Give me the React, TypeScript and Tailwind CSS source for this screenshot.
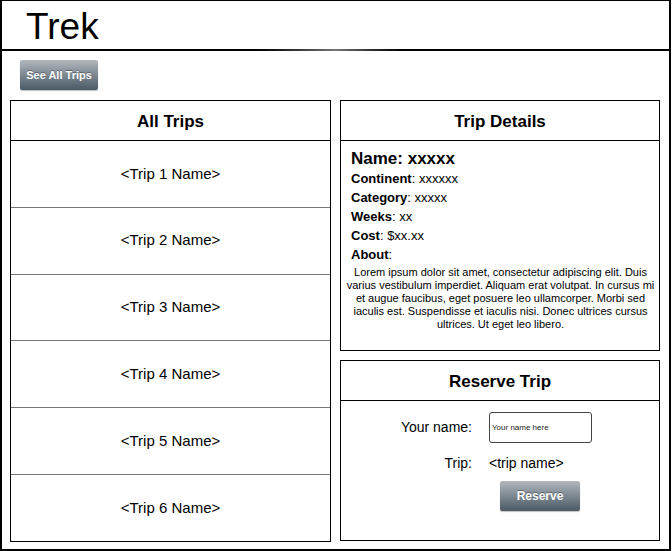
import React from 'react';

const TRIPS = ['<Trip 1 Name>', '<Trip 2 Name>', '<Trip 3 Name>', '<Trip 4 Name>', '<Trip 5 Name>', '<Trip 6 Name>'];

const DETAILS = [
  { label: 'Continent', value: 'xxxxxx' },
  { label: 'Category', value: 'xxxxx' },
  { label: 'Weeks', value: 'xx' },
  { label: 'Cost', value: '$xx.xx' },
];

const btn =
  'rounded-[2px] bg-linear-to-b from-[#b3b8bd] to-[#4a5a66] text-white font-bold [text-shadow:0_-1px_0_rgba(0,0,0,0.35)] shadow-[0_1px_1px_rgba(0,0,0,0.25)] flex items-center justify-center';

const panelTitle = 'h-[40px] shrink-0 border-b border-black flex items-center justify-center pt-[3px] text-[17px] font-bold';

export default function App() {
  return (
    <div className="w-[671px] h-[551px] bg-white border-2 border-t border-black flex flex-col font-['Liberation_Sans',Arial,sans-serif] text-black overflow-hidden">
      <header className="h-[48px] shrink-0 flex items-center pl-[24px]">
        <h1 className="text-[37px] leading-none pt-[2px]">Trek</h1>
      </header>
      <div className="h-[2px] shrink-0 bg-linear-to-r from-black from-36% via-[#777] via-50% to-black to-62%" />

      <div className="pl-[18px] pt-[9px]">
        <button className={`${btn} w-[78px] h-[30px] text-[11px]`}>See All Trips</button>
      </div>

      <div className="flex gap-[9px] pl-[8px] pt-[10px]">
        <section className="w-[321px] h-[442px] border border-black flex flex-col">
          <div className={panelTitle}>All Trips</div>
          {TRIPS.map((t, i) => (
            <div
              key={t}
              className={`flex-1 flex items-center justify-center text-[15px] ${i < TRIPS.length - 1 ? 'border-b border-[#777]' : ''}`}
            >
              {t}
            </div>
          ))}
        </section>

        <div className="flex flex-col gap-[9px]">
          <section className="w-[320px] h-[251px] border border-black flex flex-col">
            <div className={panelTitle}>Trip Details</div>
            <div className="pl-[10px] pr-[3px] pt-[8px]">
              <p className="text-[17px] leading-[20px] font-bold">Name: xxxxx</p>
              {DETAILS.map((d) => (
                <p key={d.label} className="text-[13px] leading-[19px]">
                  <span className="font-bold">{d.label}</span>: {d.value}
                </p>
              ))}
              <p className="text-[13px] leading-[19px]">
                <span className="font-bold">About</span>:
              </p>
              <p className="text-[11px] leading-[13px] text-center -ml-[6px] mt-[2px]">
                Lorem ipsum dolor sit amet, consectetur adipiscing elit. Duis varius vestibulum imperdiet. Aliquam erat
                volutpat. In cursus mi et augue faucibus, eget posuere leo ullamcorper. Morbi sed iaculis est. Suspendisse
                et iaculis nisi. Donec ultrices cursus ultrices. Ut eget leo libero.
              </p>
            </div>
          </section>

          <section className="w-[320px] h-[181px] border border-black flex flex-col">
            <div className={panelTitle}>Reserve Trip</div>
            <div className="grid grid-cols-[131px_1fr] gap-x-[17px] pt-[11px] text-[14px]">
              <span className="text-right self-center">Your name:</span>
              <input
                type="text"
                placeholder="Your name here"
                className="w-[103px] h-[31px] rounded-[3px] border border-[#444] px-[2px] text-[8px] placeholder:text-[#222] outline-none"
              />
              <span className="text-right mt-[11px] leading-[18px]">Trip:</span>
              <span className="mt-[11px] leading-[18px]">&lt;trip name&gt;</span>
              <span />
              <button className={`${btn} w-[80px] h-[30px] text-[12px] ml-[11px] mt-[9px]`}>Reserve</button>
            </div>
          </section>
        </div>
      </div>
    </div>
  );
}
